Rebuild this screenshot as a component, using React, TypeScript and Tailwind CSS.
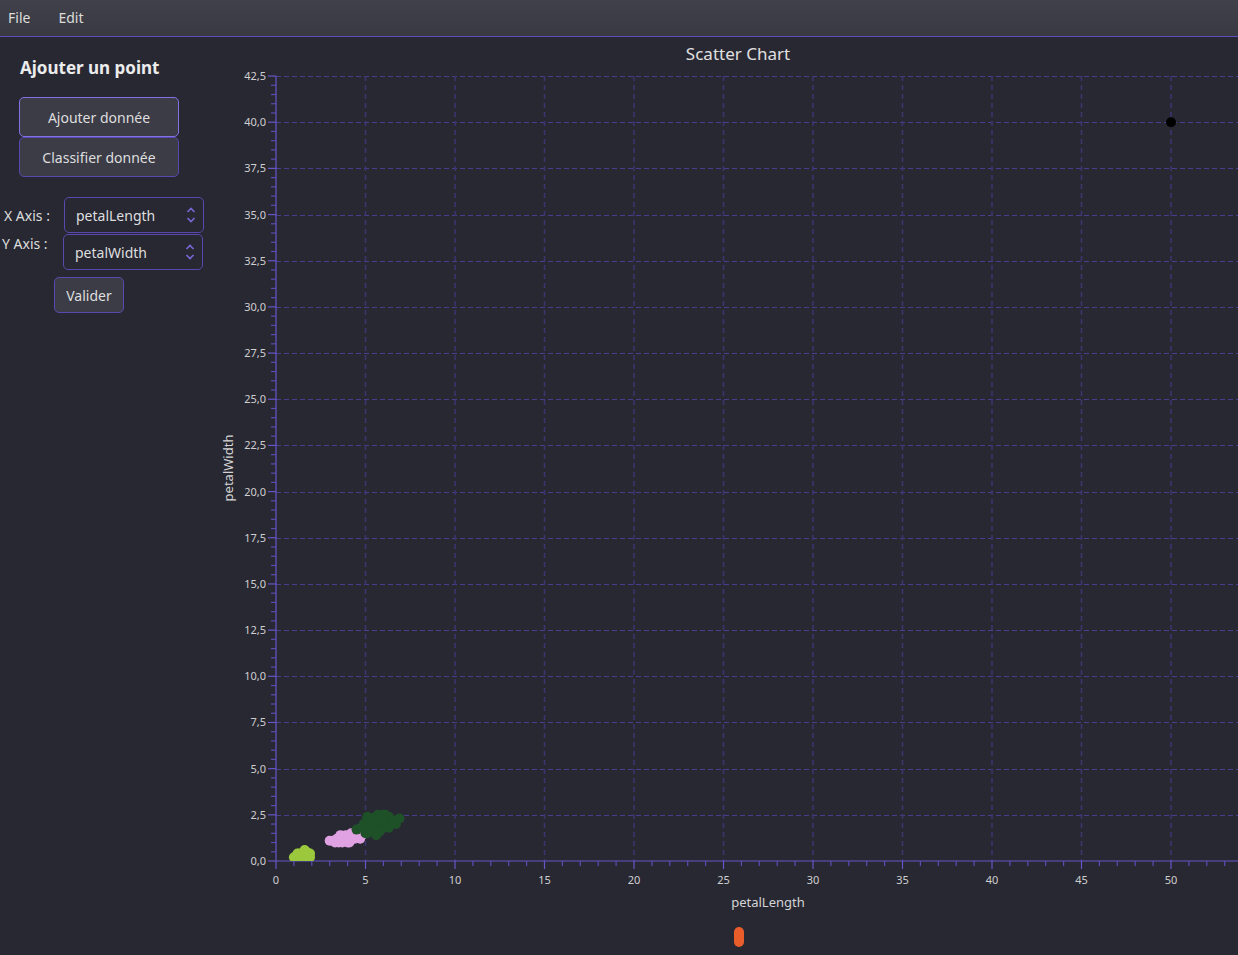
import React from "react";

const FONT = { fontFamily: '"Noto Sans", "Open Sans", sans-serif' };

// chart geometry (svg coords)
const W = 1018;
const H = 850;
const OX = 56;
const OY = 795;
const UX = 17.9;
const UY = 18.47;
const sx = (v: number) => OX + v * UX;
const sy = (v: number) => OY - v * UY;

const parse = (s: string) =>
    s
        .trim()
        .split(/\s+/)
        .map((p) => p.split(",").map(Number) as [number, number]);

const setosa = parse(
    "1.4,.2 1.3,.2 1.5,.2 1.7,.4 1.4,.3 1.5,.1 1.6,.2 1.1,.1 1.2,.2 1.5,.4 1.3,.4 1.7,.3 1.0,.2 1.9,.2 1.6,.4 1.9,.4 1.6,.6 1.4,.1 1.5,.3 1.3,.3 1.2,.4 1.8,.2 1.7,.5 1.6,.3"
);
const versicolor = parse(
    "4.7,1.4 4.5,1.5 4.9,1.5 4.0,1.3 4.6,1.5 3.3,1.0 4.6,1.3 3.9,1.4 3.5,1.0 4.2,1.5 4.0,1.0 3.6,1.3 4.4,1.4 4.1,1.0 3.9,1.1 4.8,1.8 4.7,1.2 4.3,1.3 4.8,1.4 5.0,1.7 3.8,1.1 3.7,1.0 3.9,1.2 5.1,1.6 4.4,1.3 4.1,1.3 4.4,1.2 4.0,1.2 4.2,1.3 4.2,1.2 3.0,1.1 3.4,1.2 3.2,1.1 3.6,1.4"
);
const virginica = parse(
    "6.0,2.5 5.1,1.9 5.9,2.1 5.6,1.8 5.8,2.2 6.6,2.1 4.5,1.7 6.3,1.8 5.8,1.8 6.1,2.5 5.1,2.0 5.3,1.9 5.5,2.1 5.0,2.0 5.1,2.4 5.3,2.3 5.5,1.8 6.7,2.2 6.9,2.3 5.0,1.5 5.7,2.3 4.9,2.0 6.7,2.0 4.9,1.8 5.7,2.1 6.0,1.8 4.8,1.8 5.6,2.1 5.8,1.6 6.1,1.9 6.4,2.0 5.6,2.2 5.1,1.5 5.6,1.4 6.1,2.3 5.6,2.4 5.4,2.1 5.1,2.3 5.9,2.3 5.7,2.5 5.2,2.3 5.2,2.0 5.4,2.3 6.3,2.4 5.8,2.4 6.0,2.2"
);

function Chevrons() {
    return (
        <svg width="10" height="18" viewBox="0 0 10 18" aria-hidden="true">
            <path d="M1.5 6 L5 2.5 L8.5 6" fill="none" stroke="#7a68d8" strokeWidth="1.6" />
            <path d="M1.5 12 L5 15.5 L8.5 12" fill="none" stroke="#7a68d8" strokeWidth="1.6" />
        </svg>
    );
}

function Combo({ value }: { value: string }) {
    return (
        <div className="w-[140px] h-[36px] rounded-[5px] border border-[#5a48b0] bg-[#282833] flex items-center justify-between pl-[11px] pr-[7px] text-[14px] text-[#dedede]">
            <span>{value}</span>
            <Chevrons />
        </div>
    );
}

function ScatterPlot() {
    const yMajor: number[] = [];
    for (let i = 0; i <= 17; i++) yMajor.push(i * 2.5);
    const yMinor: number[] = [];
    for (let i = 0; i <= 85; i++) if (i % 5 !== 0) yMinor.push(i * 0.5);
    const xMajor: number[] = [];
    for (let i = 0; i <= 10; i++) xMajor.push(i * 5);
    const xMinor: number[] = [];
    for (let i = 0; i <= 53; i++) if (i % 5 !== 0) xMinor.push(i);

    return (
        <svg width={W} height={H} className="block" style={FONT}>
            <defs>
                <clipPath id="plot">
                    <rect x={OX} y={sy(42.5)} width={W - OX} height={OY - sy(42.5)} />
                </clipPath>
            </defs>

            {/* grid */}
            {yMajor.slice(1).map((v) => (
                <line key={"gy" + v} x1={OX} x2={W} y1={Math.round(sy(v)) + 0.5} y2={Math.round(sy(v)) + 0.5} stroke="#483e8e" strokeWidth="1" strokeDasharray="5 3" />
            ))}
            {xMajor.slice(1).map((v) => (
                <line key={"gx" + v} x1={sx(v)} x2={sx(v)} y1={sy(42.5)} y2={OY} stroke="#3c3572" strokeWidth="1.5" strokeDasharray="5 4" />
            ))}

            {/* y axis */}
            <line x1={OX} x2={OX} y1={sy(42.5)} y2={OY} stroke="#6556c8" strokeWidth="1.2" />
            {yMajor.map((v) => (
                <line key={"ty" + v} x1={OX - 8} x2={OX} y1={sy(v)} y2={sy(v)} stroke="#6556c8" strokeWidth="1.2" />
            ))}
            {yMinor.map((v) => (
                <line key={"my" + v} x1={OX - 5} x2={OX} y1={sy(v)} y2={sy(v)} stroke="#5a4cb4" strokeWidth="1.2" />
            ))}
            {yMajor.map((v) => (
                <text key={"ly" + v} x={OX - 10} y={sy(v) + 4} textAnchor="end" fontSize="11" fill="#cfcfcf">
                    {v.toFixed(1).replace(".", ",")}
                </text>
            ))}

            {/* x axis */}
            <line x1={OX} x2={W} y1={OY} y2={OY} stroke="#6556c8" strokeWidth="1.2" />
            {xMajor.map((v) => (
                <line key={"tx" + v} x1={sx(v)} x2={sx(v)} y1={OY} y2={OY + 8} stroke="#6556c8" strokeWidth="1.2" />
            ))}
            {xMinor.map((v) => (
                <line key={"mx" + v} x1={sx(v)} x2={sx(v)} y1={OY} y2={OY + 5} stroke="#5a4cb4" strokeWidth="1.2" />
            ))}
            {xMajor.map((v) => (
                <text key={"lx" + v} x={sx(v)} y={OY + 23} textAnchor="middle" fontSize="11" fill="#cfcfcf">
                    {v}
                </text>
            ))}

            {/* axis titles */}
            <text x={548} y={841} textAnchor="middle" fontSize="13" fill="#d4d4d4">
                petalLength
            </text>
            <text x={13} y={402} textAnchor="middle" fontSize="13" fill="#d4d4d4" transform="rotate(-90 13 402)">
                petalWidth
            </text>

            {/* series */}
            <g clipPath="url(#plot)">
                {setosa.map(([x, y], i) => (
                    <circle key={"s" + i} cx={sx(x)} cy={sy(y)} r="5" fill="#9bc83c" />
                ))}
                {versicolor.map(([x, y], i) => (
                    <circle key={"v" + i} cx={sx(x)} cy={sy(y)} r="5" fill="#e0a2e2" />
                ))}
                {virginica.map(([x, y], i) => (
                    <circle key={"g" + i} cx={sx(x)} cy={sy(y)} r="5" fill="#1f5128" />
                ))}
                <circle cx={sx(50)} cy={sy(40)} r="5" fill="#000000" />
            </g>
        </svg>
    );
}

export default function App() {
    return (
        <div className="w-[1238px] h-[955px] bg-[#282833] flex flex-col overflow-hidden text-[#dedede]" style={FONT}>
            {/* menu bar */}
            <div className="h-[37px] shrink-0 pb-[2px] border-b border-[#5f50c0] bg-gradient-to-b from-[#41414b] to-[#393942] flex items-center text-[14px] text-[#dcdcdc]">
                <span className="ml-[8px]">File</span>
                <span className="ml-[28px]">Edit</span>
            </div>

            <div className="flex flex-1">
                {/* left form */}
                <div className="w-[220px] shrink-0 flex flex-col">
                    <div className="ml-[20px] mt-[19px] text-[17px] font-bold leading-[24px] text-[#ececec]">
                        Ajouter un point
                    </div>
                    <button
                        type="button"
                        className="ml-[19px] mt-[17px] w-[160px] h-[40px] rounded-[5px] border border-[#8272e6] bg-[#3c3c47] text-[14px] text-[#dedede]"
                    >
                        Ajouter donnée
                    </button>
                    <button
                        type="button"
                        className="ml-[19px] w-[160px] h-[40px] rounded-[5px] border border-[#5a48b0] bg-[#3c3c47] text-[14px] text-[#dedede]"
                    >
                        Classifier donnée
                    </button>

                    <div className="mt-[20px] flex items-center">
                        <span className="ml-[4px] w-[60px] text-[14px]">X Axis :</span>
                        <Combo value="petalLength" />
                    </div>
                    <div className="mt-[1px] flex items-start">
                        <span className="ml-[2px] w-[61px] text-[14px] leading-[20px]">Y Axis :</span>
                        <Combo value="petalWidth" />
                    </div>
                    <button
                        type="button"
                        className="ml-[54px] mt-[7px] w-[70px] h-[36px] rounded-[5px] border border-[#5a48b0] bg-[#3c3c47] text-[14px] text-[#dedede]"
                    >
                        Valider
                    </button>
                </div>

                {/* chart */}
                <div className="flex-1 flex flex-col">
                    <div className="pt-[5px] pl-[18px] text-center text-[17px] leading-[24px] text-[#e0e0e0]">
                        Scatter Chart
                    </div>
                    <ScatterPlot />
                    <div className="mt-[11px] pl-[20px] flex justify-center">
                        <span className="w-[10px] h-[20px] rounded-full bg-[#e85d2a]" />
                    </div>
                </div>
            </div>
        </div>
    );
}
